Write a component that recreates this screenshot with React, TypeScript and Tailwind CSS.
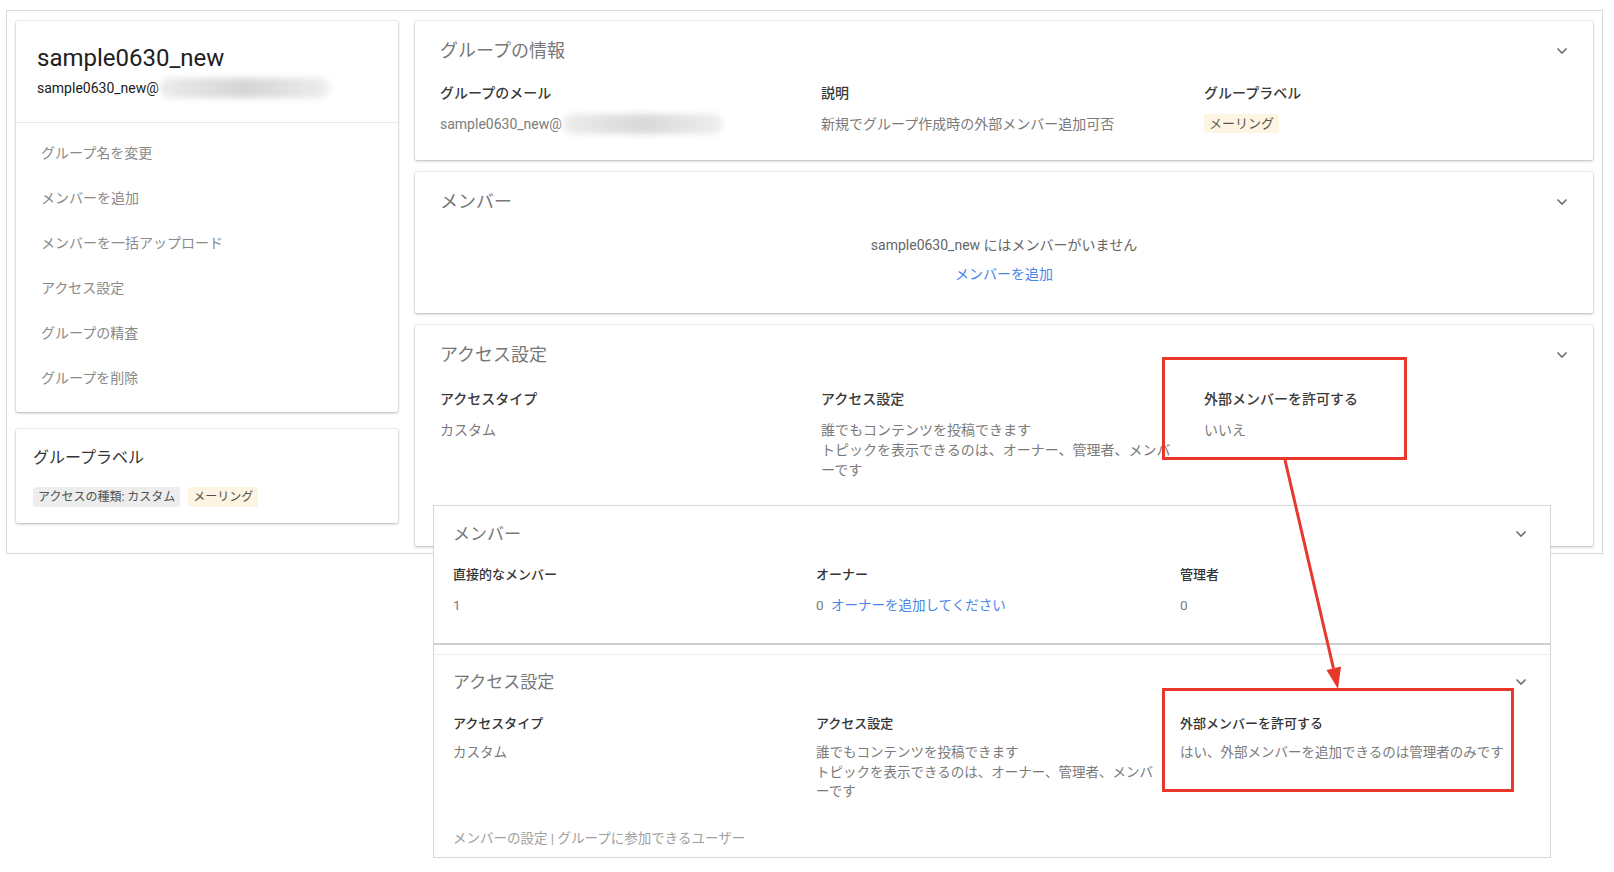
import React from 'react';

const Chevron = () => (
  <svg width="12" height="8" viewBox="0 0 12 8" className="shrink-0">
    <path d="M1.5 1.5L6 6l4.5-4.5" fill="none" stroke="#707070" strokeWidth="1.6" />
  </svg>
);

const Label = ({ children }: { children: React.ReactNode }) => (
  <div className="text-[14px] leading-[20px] font-medium text-[#3a3a3a]">{children}</div>
);

const Value = ({ children }: { children: React.ReactNode }) => (
  <div className="mt-[11px] text-[14px] leading-[20px] text-[#7b7b7b]">{children}</div>
);

const SmallLabel = ({ children }: { children: React.ReactNode }) => (
  <div className="text-[13px] leading-[18px] font-medium text-[#333333]">{children}</div>
);

const card = 'bg-white rounded-[2px] shadow-[0_0_0_1px_rgba(0,0,0,0.05),0_1px_3px_rgba(0,0,0,0.25)]';

const menu = ['グループ名を変更', 'メンバーを追加', 'メンバーを一括アップロード', 'アクセス設定', 'グループの精査', 'グループを削除'];

export default function App() {
  return (
    <div className="relative w-[1614px] h-[872px] overflow-hidden bg-white font-['Roboto','Noto_Sans_CJK_JP',sans-serif]">
      {/* background screenshot */}
      <div className="ml-[6px] mt-[10px] w-[1597px] border border-[#d9d9d9] flex items-start gap-[17px] px-[9px] pt-[10px] pb-[7px]">
        <aside className="w-[382px] shrink-0 flex flex-col gap-[17px]">
          <div className={`${card} h-[391px]`}>
            <div className="h-[102px] border-b border-[#e8e8e8] pl-[21px] pt-[22px]">
              <div className="text-[24px] leading-[30px] text-[#202020]">sample0630_new</div>
              <div className="mt-[5px] flex items-center text-[14px] leading-[20px] text-[#202020]">
                sample0630_new@
                <span className="inline-block ml-[1px] w-[170px] h-[20px] rounded-full bg-linear-to-r from-[#ececec] via-[#d5d5d5] to-[#eeeeee] blur-[3px]" />
              </div>
            </div>
            <ul className="pt-[8px]">
              {menu.map((m) => (
                <li key={m} className="h-[45px] flex items-center pl-[25px] text-[14px] text-[#8a8a8a]">
                  {m}
                </li>
              ))}
            </ul>
          </div>

          <div className={`${card} h-[94px] pl-[17px] pt-[17px]`}>
            <div className="text-[16px] leading-[24px] text-[#333333]">グループラベル</div>
            <div className="mt-[17px] flex gap-[8px] text-[12px] leading-[20px] text-[#505050]">
              <span className="px-[5px] rounded-[3px] bg-[#ededed]">アクセスの種類: カスタム</span>
              <span className="px-[5px] rounded-[3px] bg-[#fdf5e2]">メーリング</span>
            </div>
          </div>
        </aside>

        <main className="flex-1 flex flex-col gap-[12px]">
          <section className={`${card} h-[139px]`}>
            <div className="flex items-center justify-between pl-[25px] pr-[25px] pt-[18px]">
              <h2 className="text-[18px] leading-[24px] text-[#777777]">グループの情報</h2>
              <Chevron />
            </div>
            <div className="grid grid-cols-[381px_383px_1fr] pl-[25px] mt-[20px]">
              <div className="pr-[12px]">
                <Label>グループのメール</Label>
                <Value>
                  <span className="flex items-center">
                    sample0630_new@
                    <span className="inline-block ml-[1px] w-[160px] h-[20px] rounded-full bg-linear-to-r from-[#ededed] via-[#d8d8d8] to-[#efefef] blur-[3px]" />
                  </span>
                </Value>
              </div>
              <div className="pr-[12px]">
                <Label>説明</Label>
                <Value>新規でグループ作成時の外部メンバー追加可否</Value>
              </div>
              <div>
                <Label>グループラベル</Label>
                <div className="mt-[11px] flex">
                  <span className="px-[5px] rounded-[3px] bg-[#fdf5e2] text-[13px] leading-[19px] text-[#555555]">メーリング</span>
                </div>
              </div>
            </div>
          </section>

          <section className={`${card} h-[141px]`}>
            <div className="flex items-center justify-between pl-[25px] pr-[25px] pt-[18px]">
              <h2 className="text-[18px] leading-[24px] text-[#777777]">メンバー</h2>
              <Chevron />
            </div>
            <div className="mt-[21px] text-center text-[14px] leading-[20px] text-[#666666]">
              sample0630_new にはメンバーがいません
            </div>
            <div className="mt-[9px] text-center text-[14px] leading-[20px] text-[#4a86e8]">メンバーを追加</div>
          </section>

          <section className={`${card} h-[221px]`}>
            <div className="flex items-center justify-between pl-[25px] pr-[25px] pt-[18px]">
              <h2 className="text-[18px] leading-[24px] text-[#777777]">アクセス設定</h2>
              <Chevron />
            </div>
            <div className="grid grid-cols-[381px_383px_1fr] pl-[25px] mt-[22px]">
              <div className="pr-[12px]">
                <Label>アクセスタイプ</Label>
                <Value>カスタム</Value>
              </div>
              <div className="pr-[4px]">
                <Label>アクセス設定</Label>
                <Value>
                  誰でもコンテンツを投稿できます
                  <br />
                  トピックを表示できるのは、オーナー、管理者、メンバ
                  <br />
                  ーです
                </Value>
              </div>
              <div>
                <Label>外部メンバーを許可する</Label>
                <Value>いいえ</Value>
              </div>
            </div>
          </section>
        </main>
      </div>

      {/* pasted screenshot */}
      <div className="absolute left-[433px] top-[505px] w-[1118px] h-[353px] border border-[#d6d6d6] bg-white">
        <div className="h-[139px] border-b-2 border-[#cfcfcf]">
          <div className="flex items-center justify-between pl-[19px] pr-[23px] pt-[16px]">
            <h3 className="text-[17px] leading-[24px] text-[#777777]">メンバー</h3>
            <Chevron />
          </div>
          <div className="grid grid-cols-[363px_364px_1fr] pl-[19px] mt-[20px]">
            <div>
              <SmallLabel>直接的なメンバー</SmallLabel>
              <div className="mt-[12px] text-[13.5px] leading-[18px] text-[#7b7b7b]">1</div>
            </div>
            <div>
              <SmallLabel>オーナー</SmallLabel>
              <div className="mt-[12px] text-[13.5px] leading-[18px] text-[#7b7b7b]">
                0 <span className="ml-[4px] text-[#4a86e8]">オーナーを追加してください</span>
              </div>
            </div>
            <div>
              <SmallLabel>管理者</SmallLabel>
              <div className="mt-[12px] text-[13.5px] leading-[18px] text-[#7b7b7b]">0</div>
            </div>
          </div>
        </div>

        <div className="mt-[9px] border-t border-[#efefef]">
          <div className="flex items-center justify-between pl-[19px] pr-[23px] pt-[15px]">
            <h3 className="text-[17px] leading-[24px] text-[#777777]">アクセス設定</h3>
            <Chevron />
          </div>
          <div className="grid grid-cols-[363px_364px_1fr] pl-[19px] mt-[21px]">
            <div className="pr-[4px]">
              <SmallLabel>アクセスタイプ</SmallLabel>
              <div className="mt-[10px] text-[13.5px] leading-[19.5px] text-[#7b7b7b]">カスタム</div>
            </div>
            <div className="pr-[4px]">
              <SmallLabel>アクセス設定</SmallLabel>
              <div className="mt-[10px] text-[13.5px] leading-[19.5px] text-[#7b7b7b]">
                誰でもコンテンツを投稿できます
                <br />
                トピックを表示できるのは、オーナー、管理者、メンバ
                <br />
                ーです
              </div>
            </div>
            <div>
              <SmallLabel>外部メンバーを許可する</SmallLabel>
              <div className="mt-[10px] text-[13.5px] leading-[19.5px] text-[#7b7b7b]">はい、外部メンバーを追加できるのは管理者のみです</div>
            </div>
          </div>
          <div className="mt-[27px] pl-[19px] text-[13.5px] leading-[18px] text-[#a0a0a0]">
            メンバーの設定 | グループに参加できるユーザー
          </div>
        </div>
      </div>

      {/* annotations */}
      <div className="absolute left-[1162px] top-[357px] w-[245px] h-[103px] border-[3px] border-[#e8372b]" />
      <div className="absolute left-[1162px] top-[688px] w-[352px] h-[104px] border-[3px] border-[#e8372b]" />
      <svg className="absolute left-0 top-0 pointer-events-none" width="1614" height="872">
        <line x1="1285" y1="460" x2="1333.5" y2="668.5" stroke="#e8372b" strokeWidth="3" />
        <polygon points="1338,689 1341,666.5 1326.5,670" fill="#e8372b" />
      </svg>
    </div>
  );
}
